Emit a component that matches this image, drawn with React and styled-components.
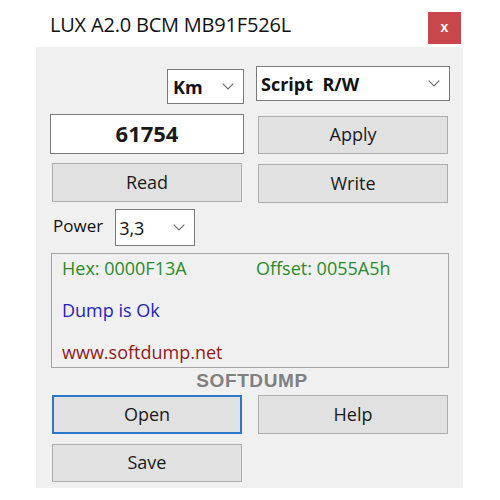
import React from 'react'
import styled, { createGlobalStyle } from 'styled-components'

const GlobalStyle = createGlobalStyle`
  html, body {
    margin: 0;
    padding: 0;
    background: #ffffff;
  }
  body {
    font-family: 'Open Sans', 'Noto Sans', sans-serif;
    color: #1a1a1a;
  }
`

const Window = styled.div`
  width: 500px;
  height: 500px;
  box-sizing: border-box;
  padding: 12px 37px 12px 36px;
  display: flex;
  flex-direction: column;
`

const TitleBar = styled.div`
  height: 35px;
  display: flex;
  justify-content: space-between;
  align-items: flex-start;
`

const Title = styled.div`
  padding: 0 0 0 14px;
  font-size: 20px;
  line-height: 26px;
  color: #111;
  letter-spacing: -0.2px;
`

const CloseButton = styled.div`
  width: 33px;
  height: 32px;
  margin-right: 2px;
  background: #c8474a;
  color: #fff;
  font-family: 'Liberation Sans', Arial, sans-serif;
  font-weight: bold;
  font-size: 14px;
  display: flex;
  align-items: center;
  justify-content: center;
  padding-bottom: 2px;
  box-sizing: border-box;
`

const Panel = styled.div`
  flex: 1;
  background: #f0f0f0;
  padding: 19px 13px 0 14px;
  display: flex;
  flex-direction: column;
`

const Row = styled.div`
  display: grid;
  grid-template-columns: 194px 194px;
  column-gap: 12px;
  margin-top: ${p => p.$mt || 0}px;
  align-items: ${p => p.$align || 'start'};
`

const Cell = styled.div`
  display: flex;
  justify-content: ${p => p.$justify || 'flex-start'};
  align-items: center;
  gap: ${p => p.$gap || 8}px;
  padding-top: ${p => p.$pt || 0}px;
`

const SelectBox = styled.div`
  box-sizing: border-box;
  width: ${p => p.$w}px;
  height: ${p => p.$h || 35}px;
  background: #fff;
  border: 1px solid #7a7a7a;
  display: flex;
  align-items: center;
  justify-content: space-between;
  padding: 0 9px 0 ${p => p.$pl || 5}px;
  font-size: 18px;
  font-weight: ${p => (p.$bold ? 700 : 400)};
  color: #111;
  white-space: pre;
`

const ValueInput = styled.div`
  box-sizing: border-box;
  width: 194px;
  height: 40px;
  background: #fff;
  border: 1px solid #7a7a7a;
  display: flex;
  align-items: center;
  justify-content: center;
  font-size: 22px;
  font-weight: 700;
  color: #1a1a1a;
  padding-bottom: 2px;
`

const Button = styled.div`
  box-sizing: border-box;
  width: 190px;
  height: ${p => p.$h || 39}px;
  margin-left: 2px;
  background: #e1e1e1;
  border: ${p => (p.$focused ? '2px solid #2b78cc' : '1px solid #adadad')};
  display: flex;
  align-items: center;
  justify-content: center;
  font-size: 18px;
  color: #1a1a1a;
  padding-bottom: 2px;
`

const Label = styled.span`
  font-size: 17px;
  color: #111;
  padding-left: 3px;
  padding-bottom: 4px;
`

const InfoBox = styled.div`
  box-sizing: border-box;
  width: 398px;
  height: 115px;
  margin: 7px 0 0 1px;
  border: 1px solid #a5a5a5;
  padding: 2px 10px 0 10px;
  display: flex;
  flex-direction: column;
  font-size: 18px;
`

const InfoLine = styled.div`
  flex-shrink: 0;
  height: ${p => p.$h || 42}px;
  line-height: 24px;
  color: ${p => p.$color};
  display: flex;
`

const InfoPart = styled.span`
  width: ${p => p.$w || 'auto'}px;
`

const Brand = styled.div`
  text-align: center;
  font-family: 'Liberation Sans', Arial, sans-serif;
  font-weight: 700;
  font-size: 19px;
  letter-spacing: 0.6px;
  color: #808080;
  line-height: 22px;
  height: 25px;
  padding-top: 2px;
  box-sizing: border-box;
  margin-left: 4px;
`

const Chevron = () => (
  <svg width="12" height="7" viewBox="0 0 12 7" fill="none">
    <path d="M0.7 0.7 L6 6 L11.3 0.7" stroke="#6b6b6b" strokeWidth="1.1" />
  </svg>
)

export default function App() {
  return (
    <>
      <GlobalStyle />
      <Window>
        <TitleBar>
          <Title>LUX A2.0 BCM MB91F526L</Title>
          <CloseButton>x</CloseButton>
        </TitleBar>
        <Panel>
          <Row>
            <Cell $justify="flex-end" $pt={3}>
              <SelectBox $w={77} $bold>
                Km
                <Chevron />
              </SelectBox>
            </Cell>
            <Cell>
              <SelectBox $w={194} $bold $pl={4}>
                {'Script  R/W'}
                <Chevron />
              </SelectBox>
            </Cell>
          </Row>
          <Row $mt={10}>
            <ValueInput>61754</ValueInput>
            <Cell $pt={2}>
              <Button $h={38}>Apply</Button>
            </Cell>
          </Row>
          <Row $mt={9}>
            <Button>Read</Button>
            <Cell $pt={1}>
              <Button>Write</Button>
            </Cell>
          </Row>
          <Row $mt={6}>
            <Cell $gap={12}>
              <Label>Power</Label>
              <SelectBox $w={80} $h={37} $pl={3}>
                3,3
                <Chevron />
              </SelectBox>
            </Cell>
          </Row>
          <InfoBox>
            <InfoLine $color="#2b8a2b">
              <InfoPart $w={194}>Hex: 0000F13A</InfoPart>
              <InfoPart>Offset: 0055A5h</InfoPart>
            </InfoLine>
            <InfoLine $color="#2424b8">Dump is Ok</InfoLine>
            <InfoLine $color="#8e1b1b" $h={24}>www.softdump.net</InfoLine>
          </InfoBox>
          <Brand>SOFTDUMP</Brand>
          <Row $mt={2}>
            <Button $focused>Open</Button>
            <Button>Help</Button>
          </Row>
          <Row $mt={10}>
            <Button $h={38}>Save</Button>
          </Row>
        </Panel>
      </Window>
    </>
  )
}
